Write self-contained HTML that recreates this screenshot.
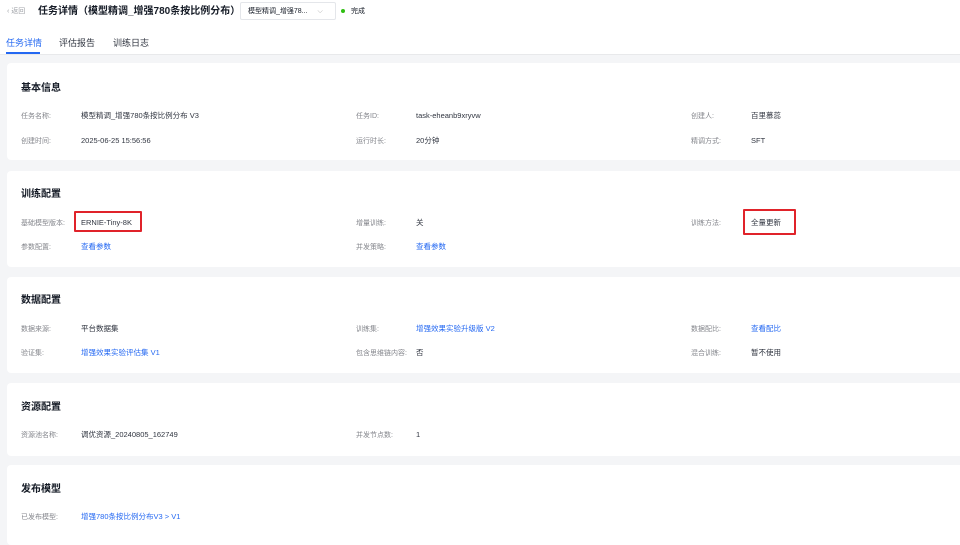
<!DOCTYPE html>
<html><head><meta charset="utf-8"><style>
*{margin:0;padding:0;box-sizing:border-box}
body{width:960px;height:531px;overflow:hidden;background:#f4f5f7;font-family:"Liberation Sans","Noto Sans CJK SC",sans-serif;position:relative;color:#151b26}
.hdr{position:absolute;left:0;top:0;width:960px;height:55px;background:#fff;border-bottom:1px solid #e8e9eb}
.abs{position:absolute;white-space:nowrap;line-height:10px}
.card{position:absolute;left:7px;width:960px;background:#fff;border-radius:4px}
.t{font-size:10px;font-weight:bold;color:#151b26;line-height:12px;margin-top:3px}
.l{font-size:7px;color:#84868c;margin-top:3px}
.v{font-size:7.5px;color:#303540;margin-top:2px}
.a{font-size:7.5px;color:#2468f2;margin-top:2px}
.box{position:absolute;border:2px solid #e0232a;border-radius:1px}
</style></head><body>
<div class="hdr"></div>
<div class="abs" style="left:7px;top:7px;font-size:7px;color:#a0a3a8">‹ 返回</div>
<div class="abs" style="left:38px;top:6px;font-size:10px;font-weight:bold;line-height:12px">任务详情（模型精调_增强780条按比例分布）</div>
<div class="abs" style="left:240px;top:2px;width:96px;height:18px;border:1px solid #e4e6ea;border-radius:2px;font-size:7px;padding:4px 0 0 7px">模型精调_增强78... <span style="color:#aaa;margin-left:8px">⌵</span></div>
<div class="abs" style="left:341px;top:9px;width:4px;height:4px;border-radius:50%;background:#30bf13"></div>
<div class="abs" style="left:351px;top:7px;font-size:7px">完成</div>
<div class="abs" style="left:6px;top:38px;font-size:9px;color:#2468f2;line-height:11px">任务详情</div>
<div class="abs" style="left:6px;top:52px;width:34px;height:2px;background:#2468f2"></div>
<div class="abs" style="left:59px;top:38px;font-size:9px;color:#303540;line-height:11px">评估报告</div>
<div class="abs" style="left:113px;top:38px;font-size:9px;color:#303540;line-height:11px">训练日志</div>

<div class="card" style="top:63px;height:97px"></div>
<div class="card" style="top:171px;height:96px"></div>
<div class="card" style="top:277px;height:96px"></div>
<div class="card" style="top:383px;height:73px"></div>
<div class="card" style="top:465px;height:80px"></div>

<div class="abs t" style="left:21px;top:80px">基本信息</div>
<div class="abs l" style="left:21px;top:109px">任务名称:</div><div class="abs v" style="left:81px;top:109px">模型精调_增强780条按比例分布 V3</div>
<div class="abs l" style="left:356px;top:109px">任务ID:</div><div class="abs v" style="left:416px;top:109px">task-eheanb9xryvw</div>
<div class="abs l" style="left:691px;top:109px">创建人:</div><div class="abs v" style="left:751px;top:109px">百里慕蕊</div>
<div class="abs l" style="left:21px;top:134px">创建时间:</div><div class="abs v" style="left:81px;top:134px">2025-06-25 15:56:56</div>
<div class="abs l" style="left:356px;top:134px">运行时长:</div><div class="abs v" style="left:416px;top:134px">20分钟</div>
<div class="abs l" style="left:691px;top:134px">精调方式:</div><div class="abs v" style="left:751px;top:134px">SFT</div>

<div class="abs t" style="left:21px;top:186px">训练配置</div>
<div class="abs l" style="left:21px;top:216px">基础模型版本:</div><div class="abs v" style="left:81px;top:216px">ERNIE-Tiny-8K</div>
<div class="box" style="left:74px;top:211px;width:68px;height:21px"></div>
<div class="abs l" style="left:356px;top:216px">增量训练:</div><div class="abs v" style="left:416px;top:216px">关</div>
<div class="abs l" style="left:691px;top:216px">训练方法:</div><div class="abs v" style="left:751px;top:216px">全量更新</div>
<div class="box" style="left:743px;top:209px;width:53px;height:26px"></div>
<div class="abs l" style="left:21px;top:240px">参数配置:</div><div class="abs a" style="left:81px;top:240px">查看参数</div>
<div class="abs l" style="left:356px;top:240px">并发策略:</div><div class="abs a" style="left:416px;top:240px">查看参数</div>

<div class="abs t" style="left:21px;top:292px">数据配置</div>
<div class="abs l" style="left:21px;top:322px">数据来源:</div><div class="abs v" style="left:81px;top:322px">平台数据集</div>
<div class="abs l" style="left:356px;top:322px">训练集:</div><div class="abs a" style="left:416px;top:322px">增强效果实验升级版 V2</div>
<div class="abs l" style="left:691px;top:322px">数据配比:</div><div class="abs a" style="left:751px;top:322px">查看配比</div>
<div class="abs l" style="left:21px;top:346px">验证集:</div><div class="abs a" style="left:81px;top:346px">增强效果实验评估集 V1</div>
<div class="abs l" style="left:356px;top:346px">包含思维链内容:</div><div class="abs v" style="left:416px;top:346px">否</div>
<div class="abs l" style="left:691px;top:346px">混合训练:</div><div class="abs v" style="left:751px;top:346px">暂不使用</div>

<div class="abs t" style="left:21px;top:399px">资源配置</div>
<div class="abs l" style="left:21px;top:428px">资源池名称:</div><div class="abs v" style="left:81px;top:428px">调优资源_20240805_162749</div>
<div class="abs l" style="left:356px;top:428px">并发节点数:</div><div class="abs v" style="left:416px;top:428px">1</div>

<div class="abs t" style="left:21px;top:481px">发布模型</div>
<div class="abs l" style="left:21px;top:510px">已发布模型:</div><div class="abs a" style="left:81px;top:510px">增强780条按比例分布V3 &gt; V1</div>
</body></html>
